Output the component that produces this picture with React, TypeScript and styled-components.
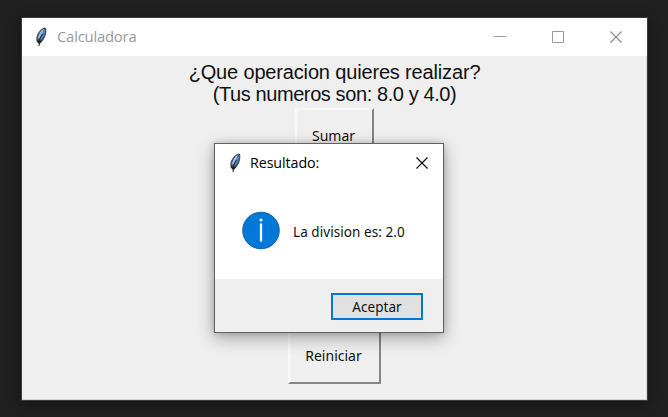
import React from 'react';
import styled, { createGlobalStyle } from 'styled-components';

const GlobalStyle = createGlobalStyle`
  * { box-sizing: border-box; }
  body { margin: 0; background: #202020; overflow: hidden; }
`;

const Desktop = styled.main`
  position: relative;
  width: 668px;
  height: 417px;
  padding: 17px 20px 16px 21px;
  background: #202020;
  font-family: 'Noto Sans', sans-serif;
`;

const MainWindow = styled.section`
  display: flex;
  flex-direction: column;
  width: 627px;
  height: 384px;
  border: 1px solid #3c3c3c;
  background: #efefef;
  box-shadow: 0 3px 12px rgba(0, 0, 0, 0.4);
`;

const TitleBar = styled.header<{ $dialog?: boolean }>`
  display: flex;
  align-items: center;
  flex: none;
  height: 38px;
  padding: 0 ${p => (p.$dialog ? '15px 0 14px' : '25px 0 13px')};
  background: #fff;
`;

const Title = styled.span<{ $active?: boolean }>`
  flex: 1;
  margin-left: ${p => (p.$active ? 8 : 9)}px;
  padding-bottom: ${p => (p.$active ? 0 : 2)}px;
  font-family: 'Open Sans', sans-serif;
  font-size: ${p => (p.$active ? 14.3 : 14.8)}px;
  line-height: 20px;
  letter-spacing: ${p => (p.$active ? -0.1 : -0.2)}px;
  color: ${p => (p.$active ? '#000' : '#999')};
  white-space: nowrap;
`;

const Controls = styled.div`
  display: flex;
  gap: 46px;
`;

const Body = styled.div`
  display: flex;
  flex-direction: column;
  align-items: center;
  flex: 1;
  padding-top: 5px;
  box-shadow: inset -1px -1px 0 #d4d4d4;
`;

const Heading = styled.h1`
  margin: 0 0 3px;
  font: 400 20px/22px 'Liberation Sans', Arial, sans-serif;
  text-align: center;
  white-space: nowrap;
  color: #111;
`;

const HeadingLine = styled.span<{ $spacing: number }>`
  display: block;
  letter-spacing: ${p => p.$spacing}px;
`;

const RaisedButton = styled.button<{ $width: number; $lift?: number }>`
  width: ${p => p.$width}px;
  height: 55px;
  padding: 0 2px ${p => p.$lift ?? 0}px 0;
  border: 2px solid;
  border-color: #f9f9f9 #858585 #858585 #f9f9f9;
  background: #efefef;
  font: 400 14px/20px 'Noto Sans', sans-serif;
  letter-spacing: 0;
  color: #111;
`;

const Actions = styled.div`
  display: flex;
  flex-direction: column;
  align-items: center;
  justify-content: space-between;
  height: 276px;
`;

const Dialog = styled.section`
  position: absolute;
  left: 214px;
  top: 143px;
  display: flex;
  flex-direction: column;
  width: 230px;
  height: 190px;
  border: 1px solid #606060;
  background: #fff;
  box-shadow: 0 5px 16px rgba(0, 0, 0, 0.32), 0 0 6px rgba(0, 0, 0, 0.16);
`;

const Message = styled.div`
  display: flex;
  align-items: center;
  flex: 1;
  gap: 12px;
  padding: 0 0 0 27px;
  font-size: 13.5px;
  line-height: 20px;
  letter-spacing: 0.07px;
  white-space: nowrap;
  color: #111;
`;

const MessageText = styled.span`
  margin-top: 3px;
`;

const Footer = styled.footer`
  display: flex;
  justify-content: flex-end;
  align-items: flex-start;
  flex: none;
  height: 53px;
  padding: 14px 20px 0 0;
  background: #efefef;
`;

const AcceptButton = styled.button`
  width: 92px;
  height: 27px;
  padding: 0;
  border: 2px solid #0078d7;
  background: #e1e1e1;
  font: 400 13.5px/22px 'Noto Sans', sans-serif;
  letter-spacing: 0.05px;
  color: #111;
`;

const Icon = styled.svg`
  display: block;
  flex: none;
`;

const Feather = () => (
  <Icon width="13" height="20" viewBox="0 0 13 20">
    <path d="M9.500.500C6 1.500 3 5 1.700 9c-.7 2.400-.5 4.500.4 6L4 17 8 13.500C10.700 10 12 5 11 1Z" fill="#46515e" />
    <path d="M9 1.800C6 3.500 3.400 7 2.700 12L5 10.500 8 5Z" fill="#9fbddb" />
    <path d="M10.200 2 6.500 7.500 4.500 13.500C8 12 10.300 7 10.200 2Z" fill="#4d8bd0" />
    <path d="M7.500 7 5 11.500 4 19" fill="none" stroke="#1b2026" strokeWidth="1" />
    <path d="m2.200 13.500 2.300 2.500 2.200-2" fill="none" stroke="#1b2026" strokeWidth="1.500" />
  </Icon>
);

const Close = ({ color }: { color: string }) => (
  <Icon width="12" height="12" viewBox="0 0 12 12">
    <path d="m.5.5 11 11m0-11-11 11" fill="none" stroke={color} strokeWidth="1.1" />
  </Icon>
);

export default function App() {
  return (
    <>
      <GlobalStyle />
      <Desktop>
        <MainWindow>
          <TitleBar>
            <Feather />
            <Title>Calculadora</Title>
            <Controls>
              <Icon width="12" height="12" viewBox="0 0 12 12"><path d="M0 5.500h12" stroke="#999" /></Icon>
              <Icon width="12" height="12" viewBox="0 0 12 12"><path d="M.5.500h11v11H.5Z" fill="none" stroke="#999" /></Icon>
              <Close color="#888" />
            </Controls>
          </TitleBar>
          <Body>
            <Heading>
              <HeadingLine $spacing={-0.16}>¿Que operacion quieres realizar?</HeadingLine>
              <HeadingLine $spacing={-0.4}>(Tus numeros son: 8.0 y 4.0)</HeadingLine>
            </Heading>
            <Actions>
              <RaisedButton $width={79}>Sumar</RaisedButton>
              <RaisedButton $width={93} $lift={2}>Reiniciar</RaisedButton>
            </Actions>
          </Body>
        </MainWindow>
        <Dialog>
          <TitleBar $dialog>
            <Feather />
            <Title $active>Resultado:</Title>
            <Close color="#000" />
          </TitleBar>
          <Message>
            <Icon width="39" height="39" viewBox="0 0 39 39">
              <circle cx="19" cy="19.500" r="18.300" fill="#0078d7" stroke="#17609f" strokeWidth="1" />
              <circle cx="19" cy="9" r="1.500" fill="#fff" />
              <path d="M19 12.500v18" stroke="#fff" strokeWidth="2.300" />
            </Icon>
            <MessageText>La division es: 2.0</MessageText>
          </Message>
          <Footer><AcceptButton>Aceptar</AcceptButton></Footer>
        </Dialog>
      </Desktop>
    </>
  );
}
